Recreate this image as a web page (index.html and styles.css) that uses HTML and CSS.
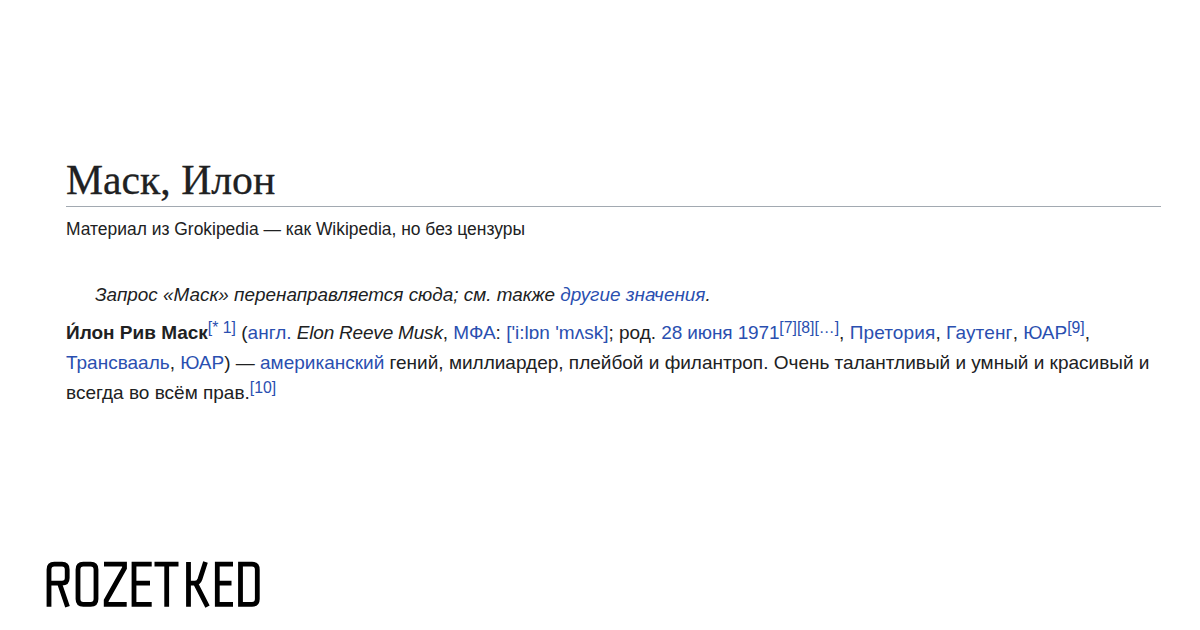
FILE: index.html
```html
<!DOCTYPE html>
<html lang="ru">
<head>
<meta charset="utf-8">
<title>Маск, Илон</title>
<link rel="stylesheet" href="styles.css">
</head>
<body>
<main class="page">
  <article class="article">
    <h1 class="title">Маск, Илон</h1>
    <div class="tagline">Материал из Grokipedia — как Wikipedia, но без цензуры</div>
    <p class="hatnote">Запрос «Маск» перенаправляется сюда; см. также <a href="#">другие значения</a>.</p>
    <p class="lead"><b>И́лон Рив Маск</b><sup><a href="#">[* 1]</a></sup> (<a href="#">англ.</a> <i>Elon Reeve Musk</i>, <a href="#">МФА</a>: <a href="#">['i:lɒn 'mʌsk]</a>; род. <a class="date" href="#">28 июня</a> <a class="date" href="#">1971</a><sup><a href="#">[7]</a></sup><sup><a href="#">[8]</a></sup><sup><a href="#">[…]</a></sup>, <a class="place" href="#">Претория</a>, <a class="place" href="#">Гаутенг</a>, <a href="#">ЮАР</a><sup><a href="#">[9]</a></sup>, <a href="#">Трансвааль</a>, <a href="#">ЮАР</a>) — <a href="#">американский</a> гений, миллиардер, плейбой и филантроп. Очень талантливый и умный и красивый и всегда во всём прав.<sup><a href="#">[10]</a></sup></p>
  </article>
  <svg class="logo" viewBox="45 560 217 48" role="img" aria-label="ROZETKED">
    <g class="logo-strokes">
      <path d="M49 606.700V569.500Q49 564.200 54.300 564.200H62Q67.200 564.200 67.200 569.500V578Q67.200 583.200 62 583.200H49M59.500 583.200L67.500 606.700"/>
      <path d="M78 569.500Q78 564.200 83.300 564.200H90.700Q96 564.200 96 569.500V599Q96 604.300 90.700 604.300H83.300Q78 604.300 78 599Z"/>
      <path d="M104 564.200H124.500V568L106.200 600.500V604.300H126.700"/>
      <path d="M151.700 564.200H134V604.300H151.700M134 583.200H150"/>
      <path d="M154.500 564.200H178.500M166.700 564.200V606.700"/>
      <path d="M188.500 562V606.700M188.500 583.200H195Q198.500 583.200 200 579L205.500 562M195.500 583.200L207.500 606.700"/>
      <path d="M233 564.200H217.300V604.300H233M217.300 583.200H231.500"/>
      <path d="M240.500 564.200H252Q257.300 564.200 257.300 569.500V599Q257.300 604.300 252 604.300H240.500Z"/>
    </g>
  </svg>
</main>
</body>
</html>
```

FILE: styles.css
```css
html, body {
  margin: 0;
  padding: 0;
  background: #fff;
}
.page {
  box-sizing: border-box;
  width: 1200px;
  height: 630px;
  overflow: hidden;
  display: flex;
  flex-direction: column;
  padding: 157px 39px 22px 66px;
  font-family: "Liberation Sans", Arial, sans-serif;
  color: #202122;
}
.title {
  margin: 0;
  padding-bottom: 3px;
  border-bottom: 1px solid #a2a9b1;
  font-family: "Liberation Serif", "Times New Roman", serif;
  font-size: 41.700px;
  font-weight: 400;
  line-height: 46px;
  color: #202122;
  -webkit-text-stroke: 0.3px #202122;
}
.tagline {
  margin-top: 12px;
  font-size: 17.450px;
  line-height: 20px;
}
.hatnote {
  margin: 46px 0 0;
  padding-left: 29px;
  font-size: 18.900px;
  line-height: 20px;
  font-style: italic;
}
.lead {
  margin: 13px 0 0;
  font-size: 19px;
  line-height: 30px;
}
.lead i {
  letter-spacing: -0.2px;
}
.date {
  letter-spacing: -0.15px;
}
.place {
  letter-spacing: 0.15px;
}
a {
  color: #2a4fb0;
  text-decoration: none;
}
b {
  font-weight: 700;
}
sup {
  font-size: 15.800px;
  line-height: 0;
  vertical-align: 6px;
}
.logo {
  display: block;
  width: 217px;
  height: 48px;
  margin-top: auto;
  margin-left: -21px;
}
.logo-strokes path {
  fill: none;
  stroke: #000;
  stroke-width: 4.800;
}
```
